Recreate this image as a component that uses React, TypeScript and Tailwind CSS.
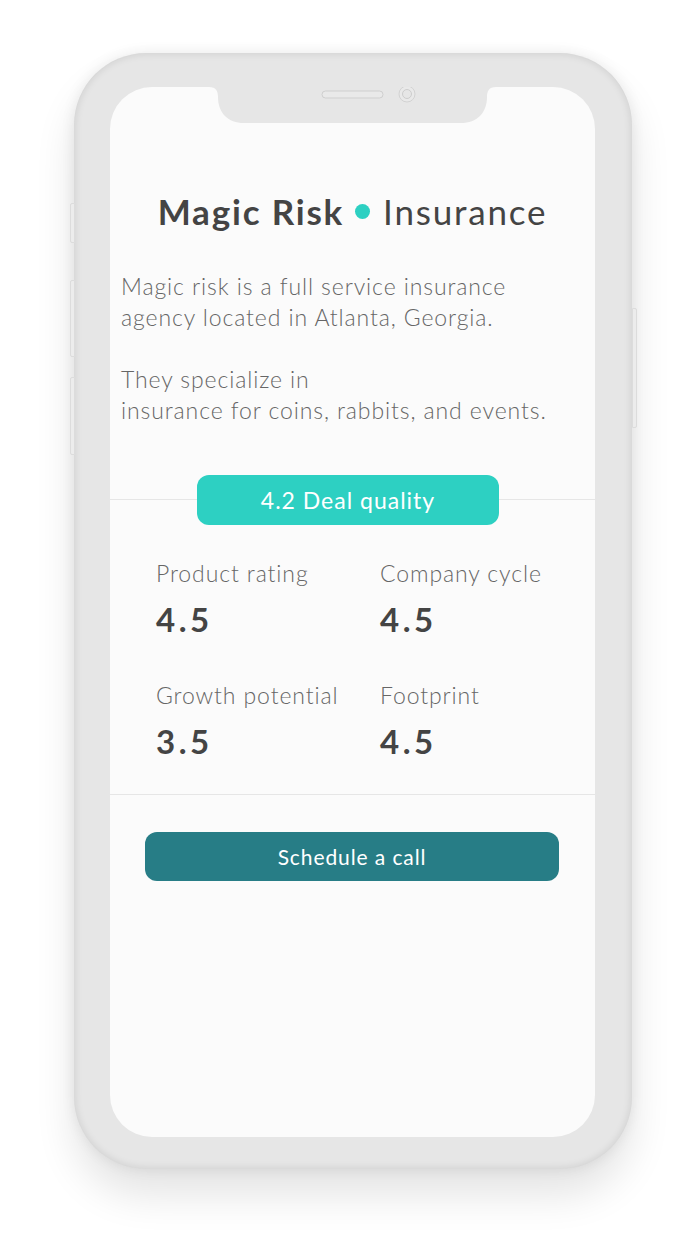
const stats = [
  { label: "Product rating", value: "4.5" },
  { label: "Company cycle", value: "4.5" },
  { label: "Growth potential", value: "3.5" },
  { label: "Footprint", value: "4.5" },
];

function Notch() {
  return (
    <div className="absolute left-[99px] top-0 w-[287px] h-[36px]">
      <svg width="287" height="36" viewBox="0 0 287 36" className="absolute inset-0">
        <path
          d="M0 0 H287 C280 0 278 4 278 10 C278 26 268 36 252 36 H35 C19 36 9 26 9 10 C9 4 7 0 0 0 Z"
          fill="#e6e6e6"
        />
        <rect x="113" y="4" width="61" height="7" rx="3.5" fill="#e9e9e9" stroke="#cfcfcf" strokeWidth="1" />
        <circle cx="198" cy="7" r="8" fill="#e9e9e9" stroke="#d2d2d2" strokeWidth="1" />
        <circle cx="198" cy="7" r="4.5" fill="#e6e6e6" stroke="#cdcdcd" strokeWidth="1" />
      </svg>
    </div>
  );
}

export default function App() {
  return (
    <div className="min-h-[1240px] w-[700px] bg-white pt-[53px] pl-[74px]" style={{ fontFamily: "Lato, 'Noto Sans', sans-serif" }}>
      <div className="relative w-[558px] h-[1116px] rounded-[72px] bg-[#e6e6e6] pt-[34px] pl-[36px] shadow-[0_26px_40px_rgba(0,0,0,0.11),0_0_14px_rgba(0,0,0,0.08),inset_0_0_8px_rgba(0,0,0,0.12)]">
        {/* side buttons */}
        <div className="absolute -left-[4px] top-[150px] w-[5px] h-[40px] rounded-l-[2px] bg-[#ececec] border border-[#dcdcdc]" />
        <div className="absolute -left-[4px] top-[227px] w-[5px] h-[77px] rounded-l-[2px] bg-[#ececec] border border-[#dcdcdc]" />
        <div className="absolute -left-[4px] top-[324px] w-[5px] h-[78px] rounded-l-[2px] bg-[#ececec] border border-[#dcdcdc]" />
        <div className="absolute -right-[5px] top-[255px] w-[5px] h-[120px] rounded-r-[2px] bg-[#ececec] border border-[#dcdcdc]" />

        <div className="relative w-[485px] h-[1050px] rounded-[42px] bg-[#fbfbfb] flex flex-col overflow-hidden">
          <Notch />

          <h1 className="mt-[102px] h-[44px] flex items-center justify-center text-[35px] leading-[44px] tracking-[1.8px] text-[#444]">
            <span className="font-bold">Magic Risk</span>
            <span className="inline-block w-[15px] h-[15px] rounded-full bg-[#2dd0c2] ml-[11px] mr-[13px]" />
            <span>Insurance</span>
          </h1>

          <div className="mt-[38px] pl-[11px] text-[23px] leading-[31px] tracking-[0.9px] text-[#666] font-light flex flex-col gap-[31px]">
            <p>
              Magic risk is a full service insurance
              <br />
              agency located in Atlanta, Georgia.
            </p>
            <p>
              They specialize in
              <br />
              insurance for coins, rabbits, and events.
            </p>
          </div>

          <div className="mt-[73px] border-t border-b border-[#e6e6e6] pb-[33px] flex flex-col">
            <div className="-mt-[25px] ml-[87px] w-[302px] h-[50px] rounded-[12px] bg-[#2dd0c2] flex items-center justify-center text-white text-[23px] tracking-[1px]">
              4.2 Deal quality
            </div>
            <div className="mt-[34px] pl-[46px] grid grid-cols-[224px_1fr] gap-y-[42px]">
              {stats.map((s) => (
                <div key={s.label} className="flex flex-col gap-[12px]">
                  <div className="text-[23px] leading-[28px] tracking-[0.9px] text-[#666] font-light">{s.label}</div>
                  <div className="text-[33px] leading-[40px] tracking-[3.5px] font-bold text-[#444]">{s.value}</div>
                </div>
              ))}
            </div>
          </div>

          <button className="mt-[37px] ml-[35px] w-[414px] h-[49px] rounded-[12px] bg-[#277d86] text-white text-[21px] tracking-[0.9px]">
            Schedule a call
          </button>
        </div>
      </div>
    </div>
  );
}
